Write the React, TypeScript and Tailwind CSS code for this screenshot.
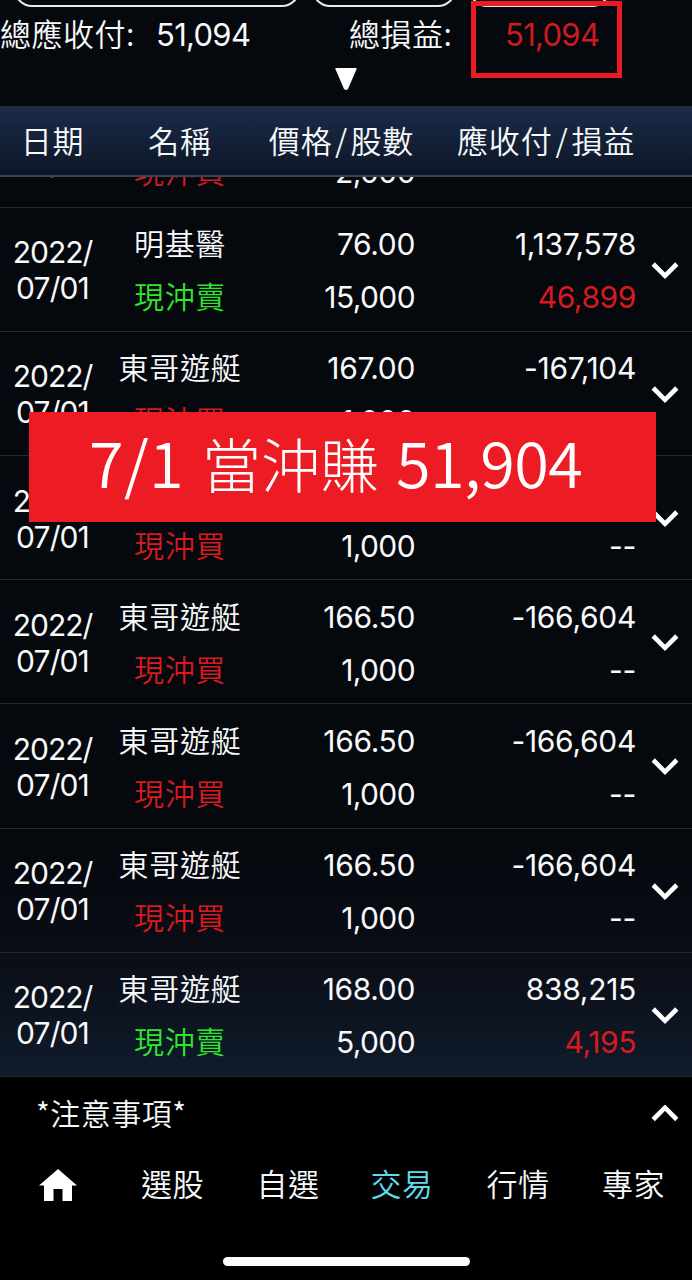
import React from "react";

const CJK = "font-['Noto_Sans_CJK_TC',sans-serif]";
const NUM = "font-['Inter','Noto_Sans_CJK_TC',sans-serif]";

type Trade = {
  name: string;
  side: "buy" | "sell";
  price: string;
  shares: string;
  amount: string;
  profit: string;
  year?: string;
};

const yacht: Trade = { name: "東哥遊艇", side: "buy", price: "166.50", shares: "1,000", amount: "-166,604", profit: "--" };

const trades: Trade[] = [
  { name: "", side: "buy", price: "", shares: "2,000", amount: "", profit: "", year: "" },
  { name: "明基醫", side: "sell", price: "76.00", shares: "15,000", amount: "1,137,578", profit: "46,899" },
  { ...yacht, price: "167.00", amount: "-167,104" },
  yacht,
  yacht,
  yacht,
  yacht,
  { ...yacht, side: "sell", price: "168.00", shares: "5,000", amount: "838,215", profit: "4,195" },
];

function Chevron({ up = false }: { up?: boolean }) {
  return (
    <svg width="28" height="18" viewBox="0 0 28 18" fill="none" stroke="#fff" strokeWidth="4.6">
      <path d={up ? "M2.2 14.5 14 2.7 25.8 14.5" : "M2.2 2 14 13.8 25.8 2"} />
    </svg>
  );
}

function Row({ t }: { t: Trade }) {
  const hasProfit = t.profit !== "--";
  return (
    <div className="flex h-[124.2px] w-full shrink-0 border-b-[1.5px] border-[#222932] text-[#f8f9fb] first:h-[125.5px]">
      <div className={`w-[105px] shrink-0 pt-[26.5px] text-center text-[30px] leading-[36px] ${NUM} font-normal`}>
        <div className="h-[36px] tracking-[-1px]">{t.year ?? "2022/"}</div>
        <div className="h-[36px] tracking-[-0.9px]">07/01</div>
      </div>
      <div className={`w-[150px] shrink-0 whitespace-nowrap pt-[8.5px] text-center text-[30px] leading-[53px] tracking-[0.7px] ${CJK} font-[350]`}>
        <div className="h-[53px]">{t.name}</div>
        <div className={t.side === "buy" ? "h-[53px] text-[#d81a20]" : "h-[53px] text-[#2ee62e]"}>{t.side === "buy" ? "現沖買" : "現沖賣"}</div>
      </div>
      <div className={`w-[160px] shrink-0 pt-[10.5px] text-right text-[30px] leading-[53px] ${NUM} font-normal`}>
        <div className="h-[53px] tracking-[-0.35px]">{t.price}</div>
        <div className="h-[53px] tracking-[-0.6px]">{t.shares}</div>
      </div>
      <div className={`w-[221px] shrink-0 pt-[10.5px] text-right text-[30px] leading-[53px] tracking-[-0.3px] ${NUM} font-normal`}>
        <div className="h-[53px]">{t.amount}</div>
        <div className={hasProfit ? "h-[53px] tracking-[-0.4px] text-[#d81a20]" : "h-[53px]"}>{t.profit}</div>
      </div>
      <div className="ml-[15px] mt-[54px]">
        <Chevron />
      </div>
    </div>
  );
}

export default function App() {
  return (
    <div className="relative flex h-[1280px] w-[692px] flex-col overflow-hidden bg-black text-[#f8f9fb]">
      <div className="h-[106px] shrink-0 bg-[#05080d]">
        <div className="flex h-[7px] pl-[14px]">
          <div className="flex h-[7px] w-[286px] flex-col justify-end overflow-hidden">
            <div className="h-[40px] shrink-0 rounded-[18px] border-2 border-[#e8eaee]" />
          </div>
          <div className="ml-[12px] flex h-[7px] w-[144px] flex-col justify-end overflow-hidden">
            <div className="h-[40px] shrink-0 rounded-[18px] border-2 border-[#e8eaee]" />
          </div>
          <div className="ml-[13px] flex h-[7px] w-[141px] flex-col justify-end overflow-hidden">
            <div className="h-[40px] shrink-0 rounded-[18px] border-2 border-[#e8eaee]" />
          </div>
        </div>
        <div className="flex h-[56px] whitespace-nowrap text-[31px] font-[350] leading-[56px]">
          <div className={`w-[156px] leading-[52px] tracking-[0.5px] ${CJK}`}>總應收付:</div>
          <div className={`w-[193px] font-normal tracking-[-0.7px] ${NUM}`}>51,094</div>
          <div className={`w-[156px] leading-[52px] tracking-[0.5px] ${CJK}`}>總損益:</div>
          <div className={`font-normal tracking-[-0.7px] text-[#d01a20] ${NUM}`}>51,094</div>
        </div>
        <div className="flex justify-center pt-[5px]">
          <svg width="22" height="22" viewBox="0 0 22 22" fill="#fff">
            <path d="M1 0H21Q22 0 21.6 1L13 21Q12 22 11 22Q10 22 9 21L.4 1Q0 0 1 0Z" />
          </svg>
        </div>
      </div>

      <div className={`flex h-[71px] shrink-0 whitespace-nowrap border-b-2 border-t-4 border-b-[#3a4654] border-t-[#1c2b3f] bg-linear-to-b from-[#1a2b48] to-[#0d1628] text-[31px] font-[350] leading-[60px] tracking-[0.8px] ${CJK}`}>
        <div className="w-[105px] text-center">日期</div>
        <div className="w-[150px] text-center">名稱</div>
        <div className="w-[159px] text-right">價格<span className="mx-[2.5px]">/</span>股數</div>
        <div className="w-[221px] text-right">應收付<span className="mx-[3px]">/</span>損益</div>
      </div>

      <div className="flex h-[900px] shrink-0 flex-col justify-end overflow-hidden bg-[linear-gradient(to_bottom,#05080d_0%,#05080d_75%,#0a0d15_86%,#101b2b_100%)]">
        {trades.map((t, i) => (
          <Row key={i} t={t} />
        ))}
      </div>

      <div className="flex h-[73px] shrink-0 items-center justify-between pl-[36px] pr-[13px]">
        <span className={`h-[73px] text-[30px] font-[350] leading-[70px] tracking-[0.5px] ${CJK}`}>*注意事項*</span>
        <Chevron up />
      </div>
      <nav className={`flex h-[70px] shrink-0 whitespace-nowrap text-center text-[31px] font-[350] leading-[66px] tracking-[0.5px] ${CJK}`}>
        <div className="flex w-[115px] items-center justify-center">
          <svg width="38" height="32" viewBox="0 0 38 32" fill="#fff">
            <path d="M19 0 38 16.5H33V32H23.5V20H14.5V32H5V16.5H0Z" />
          </svg>
        </div>
        <div className="w-[115px]">選股</div>
        <div className="w-[116px]">自選</div>
        <div className="w-[112px] text-[#5fdcec]">交易</div>
        <div className="w-[120px]">行情</div>
        <div className="w-[111px]">專家</div>
      </nav>
      <div className="mt-[37px] flex justify-center">
        <div className="h-[9px] w-[247px] rounded-full bg-white" />
      </div>

      <div className="absolute left-[471px] top-[1px] h-[77px] w-[151px] border-[5px] border-[#e91c24]" />
      <div className={`absolute left-[29px] top-[412px] flex h-[110px] w-[627px] whitespace-nowrap bg-[#ed1c24] pl-[60px] text-[63px] font-[350] leading-[98px] text-white ${CJK}`}>
        <div className="w-[113px] tracking-[0.4px]">7/1</div>
        <div className="w-[194px] text-[59px] font-light leading-[102px]">當沖賺</div>
        <div className="tracking-[-0.6px]">51,904</div>
      </div>
    </div>
  );
}
